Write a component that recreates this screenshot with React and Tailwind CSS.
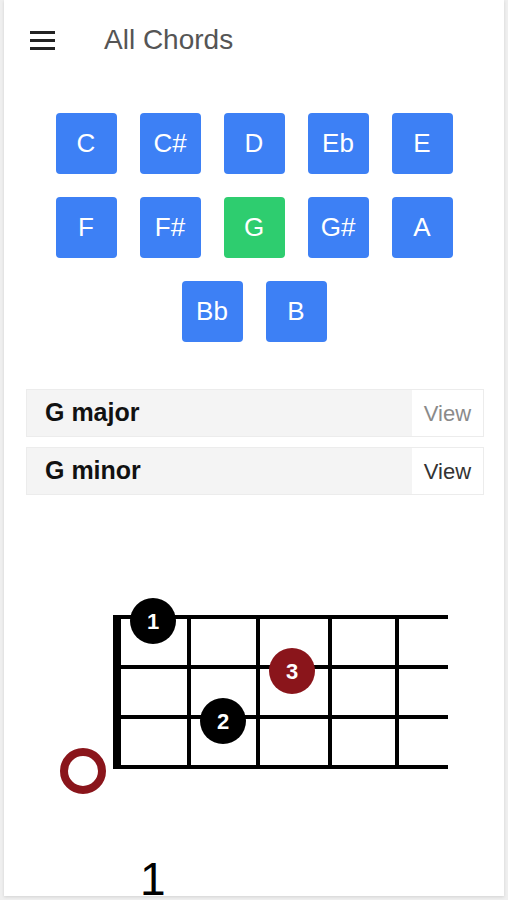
import React from "react";

const notes = ["C", "C#", "D", "Eb", "E", "F", "F#", "G", "G#", "A", "Bb", "B"];

const chords = [
  { name: "G major", viewColor: "text-[#8a8a8a]" },
  { name: "G minor", viewColor: "text-[#333]" },
];

const ChordDiagram = () => {
  // coordinates are page pixels (viewBox shifted by card offset)
  const strings = [617, 667, 717, 767];
  const frets = [189, 258, 330, 397];
  const dots = [
    { x: 153, y: 621, fill: "#000", label: "1" },
    { x: 292, y: 671, fill: "#8a151b", label: "3" },
    { x: 223, y: 721, fill: "#000", label: "2" },
  ];

  return (
    <svg width="500" height="300" viewBox="4 540 500 300" className="block">
      {strings.map((y) => (
        <line key={y} x1="113" y1={y} x2="448" y2={y} stroke="#000" strokeWidth="4" />
      ))}
      <line x1="117" y1="615" x2="117" y2="769" stroke="#000" strokeWidth="8" />
      {frets.map((x) => (
        <line key={x} x1={x} y1="615" x2={x} y2="769" stroke="#000" strokeWidth="4" />
      ))}
      {dots.map((d) => (
        <g key={d.label}>
          <circle cx={d.x} cy={d.y} r="23" fill={d.fill} />
          <text
            x={d.x}
            y={d.y + 8}
            textAnchor="middle"
            fill="#fff"
            fontSize="22"
            fontWeight="bold"
            fontFamily="Liberation Sans, Arial, sans-serif"
          >
            {d.label}
          </text>
        </g>
      ))}
      <circle cx="83" cy="771" r="19" fill="#fff" stroke="#8a151b" strokeWidth="8" />
    </svg>
  );
};

const App = () => {
  return (
    <div className="h-[900px] bg-[#efefef] px-[4px] overflow-hidden font-['Liberation_Sans',Arial,sans-serif]">
      <div className="h-[896px] bg-white shadow-[0_1px_3px_rgba(0,0,0,0.12)] overflow-hidden">
        {/* Header */}
        <div className="h-[80px] flex items-center">
          <div className="ml-[26px] flex flex-col gap-[5px] w-[25px]">
            <div className="h-[3px] bg-[#222]" />
            <div className="h-[3px] bg-[#222]" />
            <div className="h-[3px] bg-[#222]" />
          </div>
          <span className="ml-[49px] text-[28px] leading-none text-[#555]">All Chords</span>
        </div>

        {/* Note buttons */}
        <div className="mt-[21px] mx-auto w-[420px] flex flex-wrap justify-center">
          {notes.map((n) => (
            <button
              key={n}
              className={`w-[61px] h-[61px] m-[11.5px] rounded-[4px] text-white text-[26px] flex items-center justify-center ${
                n === "G" ? "bg-[#2ecd6f]" : "bg-[#3d80f5]"
              }`}
            >
              {n}
            </button>
          ))}
        </div>

        {/* Chord list */}
        <div className="mt-[36px] ml-[22px] mr-[20px] flex flex-col gap-[10px]">
          {chords.map((c) => (
            <div key={c.name} className="h-[48px] flex border border-[#ececec]">
              <div className="flex-1 bg-[#f4f4f4] flex items-center pl-[18px] text-[25px] font-bold text-[#111]">
                {c.name}
              </div>
              <div className={`w-[71px] bg-white flex items-center justify-center text-[22px] ${c.viewColor}`}>
                View
              </div>
            </div>
          ))}
        </div>

        {/* Chord diagram */}
        <div className="mt-[45px]">
          <ChordDiagram />
        </div>
        <div className="mt-[16px] pl-[136px] text-[46px] leading-none text-black">1</div>
      </div>
    </div>
  );
};

export default App;
